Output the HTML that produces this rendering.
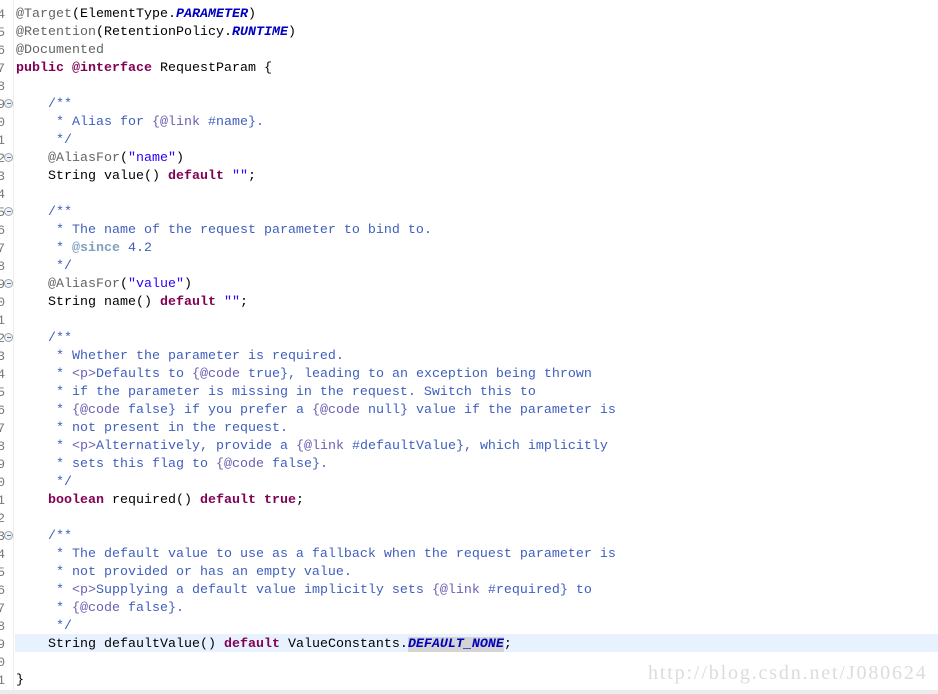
<!DOCTYPE html>
<html><head><style>
body{margin:0;width:938px;height:694px;overflow:hidden;background:#fff;position:relative;font-family:"Liberation Mono",monospace;font-size:13.33px}
.ln{position:absolute;left:0;width:938px;height:18px;line-height:18px;white-space:pre}
.num{position:absolute;right:calc(938px - 5px);top:2px;color:#787878;font-size:13px}
.code{position:absolute;left:16px;top:2px;color:#000}
.fold{position:absolute;left:4px;top:5px;width:7px;height:7px;border:1px solid #9aa4b0;border-radius:50%;background:#eef1f5}
.fold:after{content:"";position:absolute;left:1.5px;top:3px;width:4px;height:1px;background:#6b7785}
.gut{position:absolute;left:13px;top:0;width:1px;height:690px;background:#eeeeee}
.an{color:#646464}.kw{color:#7f0055;font-weight:bold}.c{color:#3f5fbf}.t{color:#6a5fb0}.tb{color:#7f9fbf;font-weight:bold}.s{color:#2a00ff}.k{color:#0000c0;font-style:italic;font-weight:bold}
.hl{background:#e8f2fe}
.wm{position:absolute;left:648px;top:662px;font-family:"Liberation Serif",serif;font-size:20px;color:#dcdcdc;letter-spacing:1.85px}
.bot{position:absolute;left:0;top:690px;width:938px;height:4px;background:#ececec}
</style></head><body>
<div class="gut"></div>
<div class="ln" style="top:4px"><span class="num">4</span><span class="code"><span class="an">@Target</span>(ElementType.<span class="k">PARAMETER</span>)</span></div>
<div class="ln" style="top:22px"><span class="num">5</span><span class="code"><span class="an">@Retention</span>(RetentionPolicy.<span class="k">RUNTIME</span>)</span></div>
<div class="ln" style="top:40px"><span class="num">6</span><span class="code"><span class="an">@Documented</span></span></div>
<div class="ln" style="top:58px"><span class="num">7</span><span class="code"><span class="kw">public</span> <span class="kw">@interface</span> RequestParam {</span></div>
<div class="ln" style="top:76px"><span class="num">8</span></div>
<div class="ln" style="top:94px"><span class="num">9</span><span class="fold"></span><span class="code"><span class="c">    /**</span></span></div>
<div class="ln" style="top:112px"><span class="num">0</span><span class="code"><span class="c">     * Alias for <span class="t">{@link</span> #name}.</span></span></div>
<div class="ln" style="top:130px"><span class="num">1</span><span class="code"><span class="c">     */</span></span></div>
<div class="ln" style="top:148px"><span class="num">2</span><span class="fold"></span><span class="code">    <span class="an">@AliasFor</span>(<span class="s">"name"</span>)</span></div>
<div class="ln" style="top:166px"><span class="num">3</span><span class="code">    String value() <span class="kw">default</span> <span class="s">""</span>;</span></div>
<div class="ln" style="top:184px"><span class="num">4</span></div>
<div class="ln" style="top:202px"><span class="num">5</span><span class="fold"></span><span class="code"><span class="c">    /**</span></span></div>
<div class="ln" style="top:220px"><span class="num">6</span><span class="code"><span class="c">     * The name of the request parameter to bind to.</span></span></div>
<div class="ln" style="top:238px"><span class="num">7</span><span class="code"><span class="c">     * <span class="tb">@since</span> <span style="color:#3f5fbf">4.2</span></span></span></div>
<div class="ln" style="top:256px"><span class="num">8</span><span class="code"><span class="c">     */</span></span></div>
<div class="ln" style="top:274px"><span class="num">9</span><span class="fold"></span><span class="code">    <span class="an">@AliasFor</span>(<span class="s">"value"</span>)</span></div>
<div class="ln" style="top:292px"><span class="num">0</span><span class="code">    String name() <span class="kw">default</span> <span class="s">""</span>;</span></div>
<div class="ln" style="top:310px"><span class="num">1</span></div>
<div class="ln" style="top:328px"><span class="num">2</span><span class="fold"></span><span class="code"><span class="c">    /**</span></span></div>
<div class="ln" style="top:346px"><span class="num">3</span><span class="code"><span class="c">     * Whether the parameter is required.</span></span></div>
<div class="ln" style="top:364px"><span class="num">4</span><span class="code"><span class="c">     * <span class="t">&lt;p&gt;</span>Defaults to <span class="t">{@code</span> true}, leading to an exception being thrown</span></span></div>
<div class="ln" style="top:382px"><span class="num">5</span><span class="code"><span class="c">     * if the parameter is missing in the request. Switch this to</span></span></div>
<div class="ln" style="top:400px"><span class="num">6</span><span class="code"><span class="c">     * <span class="t">{@code</span> false} if you prefer a <span class="t">{@code</span> null} value if the parameter is</span></span></div>
<div class="ln" style="top:418px"><span class="num">7</span><span class="code"><span class="c">     * not present in the request.</span></span></div>
<div class="ln" style="top:436px"><span class="num">8</span><span class="code"><span class="c">     * <span class="t">&lt;p&gt;</span>Alternatively, provide a <span class="t">{@link</span> #defaultValue}, which implicitly</span></span></div>
<div class="ln" style="top:454px"><span class="num">9</span><span class="code"><span class="c">     * sets this flag to <span class="t">{@code</span> false}.</span></span></div>
<div class="ln" style="top:472px"><span class="num">0</span><span class="code"><span class="c">     */</span></span></div>
<div class="ln" style="top:490px"><span class="num">1</span><span class="code">    <span class="kw">boolean</span> required() <span class="kw">default</span> <span class="kw">true</span>;</span></div>
<div class="ln" style="top:508px"><span class="num">2</span></div>
<div class="ln" style="top:526px"><span class="num">3</span><span class="fold"></span><span class="code"><span class="c">    /**</span></span></div>
<div class="ln" style="top:544px"><span class="num">4</span><span class="code"><span class="c">     * The default value to use as a fallback when the request parameter is</span></span></div>
<div class="ln" style="top:562px"><span class="num">5</span><span class="code"><span class="c">     * not provided or has an empty value.</span></span></div>
<div class="ln" style="top:580px"><span class="num">6</span><span class="code"><span class="c">     * <span class="t">&lt;p&gt;</span>Supplying a default value implicitly sets <span class="t">{@link</span> #required} to</span></span></div>
<div class="ln" style="top:598px"><span class="num">7</span><span class="code"><span class="c">     * <span class="t">{@code</span> false}.</span></span></div>
<div class="ln" style="top:616px"><span class="num">8</span><span class="code"><span class="c">     */</span></span></div>
<div class="ln" style="top:634px"><span class="num">9</span><div class="hl" style="position:absolute;left:15px;top:0;width:923px;height:18px"></div><span class="code">    String defaultValue() <span class="kw">default</span> ValueConstants.<span class="k" style="background:#d4d4d4">DEFAULT_NONE</span>;</span></div>
<div class="ln" style="top:652px"><span class="num">0</span></div>
<div class="ln" style="top:670px"><span class="num">1</span><span class="code">}</span></div>
<div class="wm">http://blog.csdn.net/J080624</div>
<div class="bot"></div>
</body></html>
